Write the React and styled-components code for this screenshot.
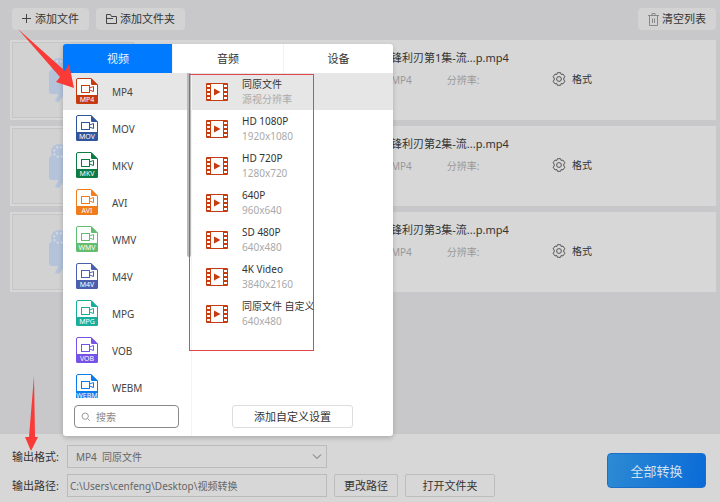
import React from "react";
import styled, { createGlobalStyle } from "styled-components";

const GlobalStyle = createGlobalStyle`
  *, *::before, *::after { box-sizing: border-box; }
  body {
    margin: 0;
    background: #c8c8ca;
    color: #444;
    font: 10px/14px "Noto Sans", "Noto Sans CJK SC", sans-serif;
  }
  button, input, select { font: inherit; color: inherit; margin: 0; }
  ul { margin: 0; padding: 0; list-style: none; }
`;

const Page = styled.div`
  position: relative;
  display: flex;
  flex-direction: column;
  min-height: 100vh;
  overflow: hidden;
`;

const Toolbar = styled.header`
  display: flex;
  gap: 7px;
  padding: 8px 4px 10px 12px;
`;

const ToolButton = styled.button`
  display: flex;
  align-items: center;
  gap: 3px;
  height: 22px;
  padding: 0 10px;
  border: 0;
  border-radius: 4px;
  background: #d3d3d3;
  color: #333;
  font-size: 11px;
  line-height: 20px;
  margin-left: ${(p) => (p.$end ? "auto" : "0")};
`;

const FileList = styled.ul`
  flex: 1;
  display: flex;
  flex-direction: column;
  gap: 6px;
  padding: 0 4px 0 10px;
`;

const FileRow = styled.li`
  display: flex;
  height: 80px;
  padding: 2px;
  background: #d7d7d7;
`;

const Thumb = styled.div`
  display: flex;
  align-items: center;
  justify-content: center;
  width: 122px;
  border: 1px solid #c6c6c6;
  background: #d2d2d2;
`;

const FileInfo = styled.div`
  display: flex;
  flex-direction: column;
  gap: 7px;
  width: 161px;
  margin-left: 257px;
  padding-top: 8px;
`;

const FileName = styled.div`
  color: #333;
  font-size: 11px;
  line-height: 16px;
  white-space: nowrap;
`;

const FileMeta = styled.div`
  display: flex;
  gap: 35px;
  color: #999;
`;

const FormatButton = styled.button`
  display: flex;
  align-items: center;
  align-self: flex-start;
  gap: 6px;
  margin-top: 30px;
  padding: 0;
  border: 0;
  background: none;
  color: #333;
`;

const Footer = styled.footer`
  display: flex;
  align-items: flex-start;
  justify-content: space-between;
  padding: 11px 14px 5px 12px;
  background: #d7d7d7;
`;

const OutputForm = styled.div`
  display: grid;
  grid-template-columns: 48px 260px 64px 90px;
  gap: 6px 7px;
  align-items: center;
`;

const FieldLabel = styled.label`
  grid-column: 1;
  color: #333;
  font-size: 11px;
  white-space: nowrap;
`;

const SelectWrap = styled.div`
  grid-column: 2;
  display: grid;
  grid-template-columns: 1fr 14px;
  align-items: center;
  height: 23px;
  border: 1px solid #bbb;
`;

const FormatSelect = styled.select`
  grid-area: 1 / 1 / 2 / 3;
  width: 100%;
  height: 21px;
  padding: 0 8px;
  border: 0;
  background: none;
  appearance: none;
  color: #666;
`;

const SelectArrow = styled.svg`
  grid-area: 1 / 2;
  pointer-events: none;
`;

const PathInput = styled.input`
  grid-column: 2;
  width: 100%;
  height: 23px;
  padding: 0 2px;
  border: 1px solid #bbb;
  background: none;
  color: #666;
`;

const PlainButton = styled.button`
  height: 23px;
  padding: 0;
  border: 1px solid #bdbdbd;
  border-radius: 2px;
  background: none;
  color: #333;
  font-size: 11px;
`;

const ConvertButton = styled.button`
  width: 99px;
  height: 35px;
  margin-top: 8px;
  padding: 0;
  border: 1px solid #1b6fc9;
  border-radius: 4px;
  background: linear-gradient(100deg, #2d8ad3, #0a6bd8);
  color: #cfe0f2;
  font-size: 13px;
`;

const Popup = styled.section`
  position: absolute;
  left: 63px;
  bottom: 66px;
  display: flex;
  flex-direction: column;
  width: 330px;
  border-radius: 3px;
  background: #fff;
  box-shadow: 0 2px 5px rgba(0, 0, 0, 0.2);
`;

const Tabs = styled.div`
  display: grid;
  grid-template-columns: 109px 111px 1fr;
  height: 29px;
`;

const Tab = styled.button`
  padding: 0;
  border: 0;
  border-left: 1px solid ${(p) => (p.$active ? "#007bff" : "#f3f3f3")};
  border-radius: ${(p) => (p.$active ? "3px 0 0 0" : "0")};
  background: ${(p) => (p.$active ? "#007bff" : "none")};
  color: ${(p) => (p.$active ? "#e8f3ff" : "#333")};
  font-size: 11px;
`;

const PopupBody = styled.div`
  display: grid;
  grid-template-columns: 129px 1fr;
  height: 363px;
`;

const FormatPane = styled.div`
  display: flex;
  flex-direction: column;
  border-right: 1px solid #f4f4f4;
`;

const FormatScroll = styled.div`
  display: flex;
  align-items: flex-start;
  height: 325px;
  overflow: hidden;
`;

const FormatItems = styled.ul`
  flex: 1;
`;

const ScrollThumb = styled.div`
  width: 4px;
  height: 184px;
  border-radius: 0 0 2px 2px;
  background: #b9b9bb;
`;

const FormatOption = styled.button`
  display: flex;
  align-items: center;
  gap: 13px;
  width: 100%;
  height: 37px;
  padding: 0 0 0 12px;
  border: 0;
  background: ${(p) => (p.$active ? "#e6e6e6" : "none")};
  color: #444;
`;

const SearchBox = styled.label`
  display: flex;
  align-items: center;
  gap: 5px;
  width: 105px;
  height: 23px;
  margin: 7px 0 0 11px;
  padding: 0 6px;
  border: 1px solid #888;
  border-radius: 4px;
`;

const SearchInput = styled.input`
  width: 100%;
  min-width: 0;
  padding: 0;
  border: 0;
  outline: 0;
  background: none;
  &::placeholder { color: #888; opacity: 1; }
`;

const PresetPane = styled.div`
  display: flex;
  flex-direction: column;
  justify-content: space-between;
  align-items: center;
  padding-bottom: 8px;
`;

const PresetItems = styled.ul`
  width: 100%;
`;

const PresetOption = styled.button`
  display: flex;
  align-items: center;
  gap: 13px;
  width: 100%;
  height: 37px;
  padding: 0 0 0 13px;
  border: 0;
  background: ${(p) => (p.$active ? "#e6e6e6" : "none")};
  text-align: left;
`;

const PresetText = styled.span`
  display: flex;
  flex-direction: column;
  padding-top: 1px;
  line-height: 15px;
  white-space: nowrap;
  color: #333;
`;

const Resolution = styled.small`
  color: #aaa;
  font-size: 10px;
`;

const AddPreset = styled.button`
  width: 121px;
  height: 23px;
  padding: 0;
  border: 1px solid #ddd;
  border-radius: 3px;
  background: #fff;
  color: #333;
  font-size: 11px;
`;

const Highlight = styled.div`
  position: absolute;
  left: 126px;
  top: 30px;
  width: 125px;
  height: 277px;
  border: 1px solid #e0474c;
  pointer-events: none;
`;

const TopArrow = styled.svg`
  position: absolute;
  left: 18px;
  bottom: 412px;
  pointer-events: none;
`;

const BottomArrow = styled.svg`
  position: absolute;
  left: 24px;
  bottom: 51px;
  pointer-events: none;
`;

const formats = [
  ["MP4", "#c63a10"],
  ["MOV", "#2f559d"],
  ["MKV", "#0b7a43"],
  ["AVI", "#f07c1c"],
  ["WMV", "#62bd70"],
  ["M4V", "#4a5fae"],
  ["MPG", "#19ad9c"],
  ["VOB", "#7652e8"],
  ["WEBM", "#0b7bee"],
];

const presets = [
  ["同原文件", "源视分辨率"],
  ["HD 1080P", "1920x1080"],
  ["HD 720P", "1280x720"],
  ["640P", "960x640"],
  ["SD 480P", "640x480"],
  ["4K Video", "3840x2160"],
  ["同原文件 自定义", "640x480"],
];

function FormatIcon({ name, color }) {
  return (
    <svg width="24" height="27" viewBox="0 0 24 27" aria-hidden="true">
      <path d="M1.5 25V2Q1.5 .5 3 .5H16L22.5 7V25Z" fill="#fff" stroke={color} />
      <path d="M16 0L23 7H17Q16 7 16 6Z" fill={color} />
      <path d="M1 17H23V24Q23 26 21.5 26H2.5Q1 26 1 24Z" fill={color} />
      <g fill="none" stroke={color}>
        <rect x="6.5" y="7.5" width="8" height="7" />
        <path d="M14.5 10L18.5 8.5V13.5L14.5 12" />
      </g>
      <text x="12" y="24" textAnchor="middle" fill="#fff" fontSize="7">
        {name}
      </text>
    </svg>
  );
}

function FilmIcon() {
  const holes = [2, 6, 10, 14];
  return (
    <svg width="24" height="18" viewBox="0 0 24 18" aria-hidden="true">
      <rect x="1" y="0" width="22" height="18" rx="1" fill="#c43c10" />
      <rect x="6" y="1" width="12" height="16" fill="#fff" />
      {holes.map((y) => (
        <g key={y} fill="#fff">
          <rect x="2" y={y} width="3" height="2" />
          <rect x="19" y={y} width="3" height="2" />
        </g>
      ))}
      <path d="M9 5.5V12.5L15.5 9Z" fill="#c43c10" />
    </svg>
  );
}

function GearIcon() {
  return (
    <svg width="14" height="14" viewBox="0 0 14 14" fill="none" stroke="#555" aria-hidden="true">
      <path
        strokeLinejoin="round"
        d="M5.4 .7H8.6L9.2 2.5L11 2.1L12.9 4.8L11.8 6V8L12.9 9.2L11 11.9L9.2 11.5L8.6 13.3H5.4L4.8 11.5L3 11.9L1.1 9.2L2.2 8V6L1.1 4.8L3 2.1L4.8 2.5Z"
      />
      <circle cx="7" cy="7" r="2.4" />
    </svg>
  );
}

function ReelArt() {
  return (
    <svg width="52" height="46" viewBox="0 0 52 46" aria-hidden="true">
      <g fill="#b4c3da">
        <circle cx="12" cy="9" r="8" />
        <circle cx="31" cy="9" r="8" />
        <rect x="2" y="13" width="37" height="24" rx="3" />
        <path d="M39 21L51 15V34L39 28Z" />
        <path d="M12 36H18L12 45L8 44Z" />
        <path d="M26 36H32L37 44L32 45Z" />
      </g>
      <circle cx="12" cy="9" r="5" fill="none" stroke="#d0d8e4" strokeWidth="2" strokeDasharray="2 2" />
      <circle cx="31" cy="9" r="5" fill="none" stroke="#d0d8e4" strokeWidth="2" strokeDasharray="2 2" />
    </svg>
  );
}

export default function App() {
  return (
    <Page>
      <GlobalStyle />
      <Toolbar>
        <ToolButton>
          <svg width="10" height="10" viewBox="0 0 10 10" stroke="#444" aria-hidden="true">
            <path d="M0 4.5H9M4.5 0V9" />
          </svg>
          添加文件
        </ToolButton>
        <ToolButton>
          <svg width="11" height="10" viewBox="0 0 11 10" fill="none" stroke="#444" aria-hidden="true">
            <path d="M.5 9.5V.5H4.5L5.5 2.5H10.5V9.5ZM.5 4.5H7" />
          </svg>
          添加文件夹
        </ToolButton>
        <ToolButton $end>
          <svg width="11" height="13" viewBox="0 0 11 13" fill="none" stroke="#888" aria-hidden="true">
            <path d="M0 2.5H11M4 2V.5H7V2M1.5 3V12.5H9.5V3M4.5 5.5V10M6.5 5.5V10" />
          </svg>
          清空列表
        </ToolButton>
      </Toolbar>

      <FileList>
        {[1, 2, 3].map((n) => (
          <FileRow key={n}>
            <Thumb>
              <ReelArt />
            </Thumb>
            <FileInfo>
              <FileName>锋利刃第{n}集-流...p.mp4</FileName>
              <FileMeta>
                <span>MP4</span>
                <span>分辨率:</span>
              </FileMeta>
            </FileInfo>
            <FormatButton>
              <GearIcon />
              格式
            </FormatButton>
          </FileRow>
        ))}
      </FileList>

      <Footer>
        <OutputForm>
          <FieldLabel htmlFor="format">输出格式:</FieldLabel>
          <SelectWrap>
            <FormatSelect id="format">
              <option>MP4{"\u00a0\u00a0"}同原文件</option>
            </FormatSelect>
            <SelectArrow width="10" height="6" viewBox="0 0 10 6" fill="none" stroke="#666">
              <path d="M1 .5L5 4.5L9 .5" />
            </SelectArrow>
          </SelectWrap>
          <FieldLabel htmlFor="path">输出路径:</FieldLabel>
          <PathInput id="path" defaultValue="C:\Users\cenfeng\Desktop\视频转换" />
          <PlainButton>更改路径</PlainButton>
          <PlainButton>打开文件夹</PlainButton>
        </OutputForm>
        <ConvertButton>全部转换</ConvertButton>
      </Footer>

      <Popup>
        <Tabs role="tablist">
          <Tab role="tab" aria-selected="true" $active>视频</Tab>
          <Tab role="tab" aria-selected="false">音频</Tab>
          <Tab role="tab" aria-selected="false">设备</Tab>
        </Tabs>
        <PopupBody>
          <FormatPane>
            <FormatScroll>
              <FormatItems>
                {formats.map(([name, color], i) => (
                  <li key={name}>
                    <FormatOption $active={i === 0}>
                      <FormatIcon name={name} color={color} />
                      {name}
                    </FormatOption>
                  </li>
                ))}
              </FormatItems>
              <ScrollThumb />
            </FormatScroll>
            <SearchBox>
              <svg width="12" height="12" viewBox="0 0 12 12" fill="none" stroke="#888" aria-hidden="true">
                <circle cx="5" cy="5" r="3.8" />
                <path d="M8 8L10.5 10.5" />
              </svg>
              <SearchInput type="search" aria-label="搜索" placeholder="搜索" />
            </SearchBox>
          </FormatPane>
          <PresetPane>
            <PresetItems>
              {presets.map(([title, size], i) => (
                <li key={title}>
                  <PresetOption $active={i === 0}>
                    <FilmIcon />
                    <PresetText>
                      {title}
                      <Resolution>{size}</Resolution>
                    </PresetText>
                  </PresetOption>
                </li>
              ))}
            </PresetItems>
            <AddPreset>添加自定义设置</AddPreset>
          </PresetPane>
        </PopupBody>
        <Highlight />
      </Popup>

      <TopArrow width="57" height="61" viewBox="0 0 57 61" aria-hidden="true">
        <path d="M0 0L47 42L51 35L56 59L38 53L42 48Z" fill="#f93a37" />
      </TopArrow>
      <BottomArrow width="19" height="75" viewBox="0 0 19 75" aria-hidden="true">
        <path d="M10 0L11 61H14L7 75L1 61H5Z" fill="#f93a37" />
      </BottomArrow>
    </Page>
  );
}
